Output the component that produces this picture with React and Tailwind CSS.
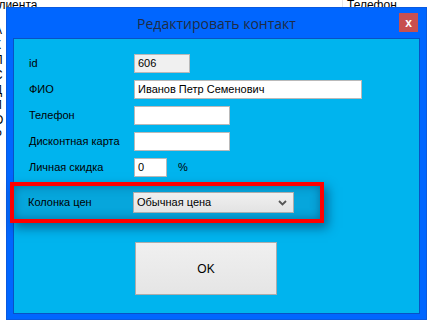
import React from 'react';

const rows = [
  { label: 'id', value: '606', w: 'w-[56px]', bg: 'bg-[#f0f0f0]' },
  { label: 'ФИО', value: 'Иванов Петр Семенович', w: 'w-[228px]', bg: 'bg-white' },
  { label: 'Телефон', value: '', w: 'w-[96px]', bg: 'bg-white' },
  { label: 'Дисконтная карта', value: '', w: 'w-[96px]', bg: 'bg-white' },
];

const behind = ['А', 'К', 'П', 'С', 'Д', 'Л', 'О', 'Р'];

export default function App() {
  return (
    <div className="relative w-[431px] h-[326px] bg-white overflow-hidden font-['Liberation_Sans',Arial,sans-serif] text-[11px] text-black">
      {/* list behind the dialog */}
      <div className="absolute left-0 top-[-4px] w-[431px] flex">
        <div className="w-[342px] text-[12px]">
          <div className="-ml-[7px] h-[15px]">клиента</div>
          <div className="flex flex-col -ml-[6px] mt-[10px]">
            {behind.map((b, i) => (
              <div key={i} className="h-[15px] text-[12px]">{b}</div>
            ))}
          </div>
        </div>
        <div className="border-l border-[#e6e6e6] pl-[4px] h-[20px] text-[12px]">Телефон</div>
      </div>

      {/* dialog */}
      <div className="absolute left-[6px] top-[7px] w-[421px] h-[313px] bg-[#0066ff] border border-[#0a5ae0] flex flex-col">
        <div className="relative h-[30px] flex items-center justify-center font-['Open_Sans',sans-serif] text-[14px] text-[#1f2c45] shrink-0">
          Редактировать контакт
          <div className="absolute right-[8px] top-[5px] w-[19px] h-[19px] bg-[#c75050] flex items-center justify-center text-white font-bold text-[12px] leading-none font-['Liberation_Sans',sans-serif]">
            x
          </div>
        </div>
        <div className="mx-[6px] h-[276px] bg-[#00b4ee] border border-[#0852c4] flex flex-col pt-[15px]">
          <div className="flex flex-col gap-[7px]">
            {rows.map((r) => (
              <div key={r.label} className="flex items-center h-[19px]">
                <div className="w-[120px] pl-[15px]">{r.label}</div>
                <div className={`${r.w} h-[19px] ${r.bg} border border-[#b9b9b9] flex items-center pl-[3px]`}>{r.value}</div>
              </div>
            ))}
            <div className="flex items-center h-[19px]">
              <div className="w-[120px] pl-[15px]">Личная скидка</div>
              <div className="w-[33px] h-[19px] bg-white border border-[#b9b9b9] flex items-center pl-[3px]">0</div>
              <div className="ml-[11px]">%</div>
            </div>
          </div>

          <div className="-ml-[4px] mt-[5px] w-[314px] h-[41px] border-[4px] border-[#ff0000] bg-[#06a6dc] shadow-[4px_5px_10px_rgba(0,50,90,0.55),inset_0_0_10px_rgba(0,70,110,0.55)] flex items-center">
            <div className="w-[119px] pl-[14px]">Колонка цен</div>
            <div className="w-[161px] h-[21px] border border-[#acacac] bg-gradient-to-b from-[#f0f0f0] to-[#e3e3e3] flex items-center pl-[3px] pr-[6px] justify-between">
              <span>Обычная цена</span>
              <svg width="9" height="6" viewBox="0 0 9 6">
                <path d="M1 1 L4.5 4.5 L8 1" fill="none" stroke="#555" strokeWidth="1.8" />
              </svg>
            </div>
          </div>

          <div className="ml-[121px] mt-[19px] w-[142px] h-[53px] border border-[#acacac] bg-gradient-to-b from-[#f0f0f0] to-[#e5e5e5] flex items-center justify-center text-[12px]">
            OK
          </div>
        </div>
      </div>
    </div>
  );
}
